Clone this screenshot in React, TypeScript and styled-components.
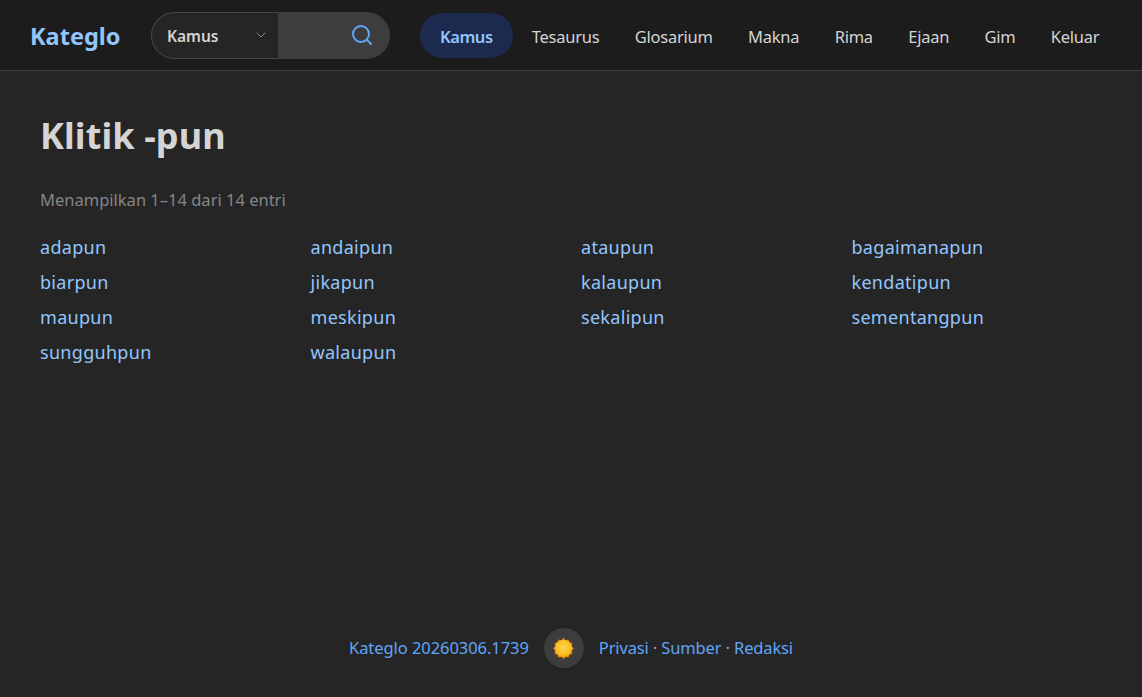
import styled, { createGlobalStyle } from "styled-components";
import { Search, ChevronDown } from "lucide-react";

const GlobalStyle = createGlobalStyle`
  html, body {
    margin: 0;
    height: 100%;
    background: #252525;
  }

  body {
    font-family: "Noto Sans", "Open Sans", sans-serif;
    color: #d4d4d4;
  }

  #root {
    height: 100%;
  }
`;

const Page = styled.div`
  height: 697px;
  display: flex;
  flex-direction: column;
  overflow: hidden;
`;

const Header = styled.header`
  height: 70px;
  flex: none;
  display: flex;
  align-items: center;
  padding: 0 30px;
  background: #1c1c1c;
  border-bottom: 1px solid #3d3d3d;
`;

const Logo = styled.a`
  flex: none;
  width: 121px;
  padding-top: 2px;
  font-size: 23.5px;
  font-weight: 700;
  color: #93c5fd;
`;

const SearchBox = styled.form`
  flex: none;
  width: 239px;
  height: 47px;
  display: flex;
  border-radius: 24px;
  overflow: hidden;
  background: #3d3d3d;
`;

const SelectPart = styled.div`
  width: 127px;
  box-sizing: border-box;
  display: flex;
  align-items: center;
  justify-content: space-between;
  padding: 2px 9px 0 15px;
  background: #252525;
  border: 1px solid #454545;
  border-right: none;
  border-radius: 24px 0 0 24px;
  font-size: 15.5px;
  font-weight: 600;
  color: #d4d4d4;

  svg {
    color: #8a8a8a;
    margin-top: -3px;
  }
`;

const InputPart = styled.div`
  flex: 1;
  display: flex;
  align-items: center;
  justify-content: flex-end;
  padding-right: 16.5px;
  color: #60a5fa;
`;

const Nav = styled.nav`
  flex: none;
  margin-left: 30px;
  display: flex;
  align-items: center;
  gap: 3px;
`;

const NavLink = styled.a<{ $active?: boolean }>`
  height: 45px;
  box-sizing: border-box;
  display: flex;
  align-items: center;
  padding: 2px ${(p) => (p.$active ? "20px" : "16.2px")} 0;
  border-radius: 23px;
  font-size: 16.5px;
  letter-spacing: ${(p) => (p.$active ? "-0.45px" : "-0.25px")};
  font-weight: ${(p) => (p.$active ? 600 : 400)};
  background: ${(p) => (p.$active ? "#1c2a4f" : "transparent")};
  color: ${(p) => (p.$active ? "#93c5fd" : "#d4d4d4")};
`;

const Main = styled.main`
  flex: 1;
  padding: 0 40px;
`;

const Title = styled.h1`
  margin: 40px 0 0;
  font-size: 36px;
  line-height: 50px;
  font-weight: 700;
  letter-spacing: 0.1px;
  color: #d4d4d4;
`;

const Summary = styled.p`
  margin: 27px 0 0;
  font-size: 16.5px;
  line-height: 24px;
  color: #858585;
`;

const WordGrid = styled.ul`
  margin: 21px 0 0;
  padding: 0;
  list-style: none;
  display: grid;
  grid-template-columns: repeat(4, 1fr);
  column-gap: 20px;
  row-gap: 7px;
`;

const WordLink = styled.a`
  display: block;
  font-size: 18px;
  line-height: 28px;
  letter-spacing: 0.3px;
  color: #93c5fd;
`;

const Footer = styled.footer`
  flex: none;
  height: 77px;
  display: flex;
  justify-content: center;
  gap: 15px;
  box-sizing: border-box;
  padding-top: 8px;
  font-size: 16.5px;
  color: #60a5fa;
`;

const FooterText = styled.span<{ $tight?: boolean }>`
  line-height: 40px;
  letter-spacing: ${(p) => (p.$tight ? "-0.14px" : "-0.06px")};
`;

const ThemeButton = styled.button`
  width: 40px;
  height: 40px;
  padding: 0;
  border: none;
  border-radius: 50%;
  background: #3d3d3d;
  display: flex;
  align-items: center;
  justify-content: center;
`;

const Dot = styled.span`
  color: #a3a3a3;
`;

const words = [
  "adapun", "andaipun", "ataupun", "bagaimanapun",
  "biarpun", "jikapun", "kalaupun", "kendatipun",
  "maupun", "meskipun", "sekalipun", "sementangpun",
  "sungguhpun", "walaupun",
];

const navItems = ["Tesaurus", "Glosarium", "Makna", "Rima", "Ejaan", "Gim", "Keluar"];

// matahari bergerigi, sama seperti tombol tema
function SunIcon() {
  const teeth = Array.from({ length: 12 }, (_, i) => i * 30);
  return (
    <svg width="21" height="21" viewBox="0 0 22 22">
      <defs>
        <radialGradient id="sun" cx="50%" cy="45%" r="55%">
          <stop offset="0%" stopColor="#fcd34d" />
          <stop offset="70%" stopColor="#fbbf24" />
          <stop offset="100%" stopColor="#f59e0b" />
        </radialGradient>
      </defs>
      {teeth.map((deg) => (
        <circle key={deg} cx="11" cy="1.8" r="1.5" fill="#d97706" transform={`rotate(${deg} 11 11)`} />
      ))}
      <circle cx="11" cy="11" r="9.3" fill="url(#sun)" />
    </svg>
  );
}

export default function App() {
  return (
    <Page>
      <GlobalStyle />
      <Header>
        <Logo>Kateglo</Logo>
        <SearchBox>
          <SelectPart>
            Kamus
            <ChevronDown size={16} strokeWidth={1.5} />
          </SelectPart>
          <InputPart>
            <Search size={24} strokeWidth={2} />
          </InputPart>
        </SearchBox>
        <Nav>
          <NavLink $active>Kamus</NavLink>
          {navItems.map((item) => (
            <NavLink key={item}>{item}</NavLink>
          ))}
        </Nav>
      </Header>
      <Main>
        <Title>Klitik -pun</Title>
        <Summary>Menampilkan 1–14 dari 14 entri</Summary>
        <WordGrid>
          {words.map((word) => (
            <li key={word}>
              <WordLink>{word}</WordLink>
            </li>
          ))}
        </WordGrid>
      </Main>
      <Footer>
        <FooterText>Kateglo 20260306.1739</FooterText>
        <ThemeButton aria-label="Tema">
          <SunIcon />
        </ThemeButton>
        <FooterText $tight>
          Privasi <Dot>·</Dot> Sumber <Dot>·</Dot> Redaksi
        </FooterText>
      </Footer>
    </Page>
  );
}
